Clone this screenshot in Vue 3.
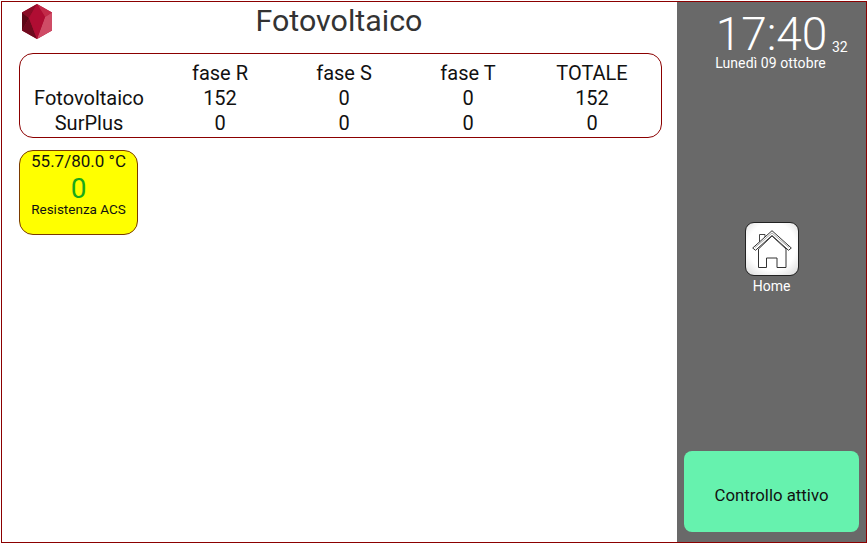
<template>
  <div class="screen">
    <main class="content">
      <header class="top">
        <svg class="logo" viewBox="0 0 32 36" width="32" height="36">
          <polygon points="16,0 31,8.5 31,26.5 16,35 1,26.5 1,8.5" fill="#a80f30" />
          <polygon points="1,8.5 8,14 1,26.5" fill="#5c0716" />
          <polygon points="1,26.5 8,14 16,35" fill="#6f0a1e" />
          <polygon points="16,0 1,8.5 8,14" fill="#8a0c26" />
          <polygon points="16,0 31,8.5 24,13" fill="#c22a48" />
          <polygon points="31,8.5 31,26.5 16,35 24,13" fill="#cf4c66" />
          <polygon points="16,0 24,13 16,35 8,14" fill="#b00d33" />
        </svg>
        <h1 class="title">Fotovoltaico</h1>
      </header>

      <section class="table-box">
        <div class="row" v-for="row in rows" :key="row.name">
          <div class="name">{{ row.name }}</div>
          <div class="cell" v-for="(val, i) in row.values" :key="i">{{ val }}</div>
        </div>
      </section>

      <div class="acs-card">
        <div class="acs-temp">55.7/80.0 °C</div>
        <div class="acs-value">0</div>
        <div class="acs-label">Resistenza ACS</div>
      </div>
    </main>

    <aside class="side">
      <div class="clock">
        <div class="time-line">
          <span class="time">17:40</span>
          <span class="secs">32</span>
        </div>
        <div class="date">Lunedì 09 ottobre</div>
      </div>

      <div class="home">
        <button class="home-btn">
          <svg viewBox="0 0 40 38" width="40" height="38">
            <path d="M7.5 13V4.5h5.5V9" fill="#fff" stroke="#444" stroke-width="1" />
            <path d="M6.5 19V37.5H14.5V28H25V37.5H34V19L20 6Z" fill="#fff" stroke="#333" stroke-width="1" />
            <path d="M.7 18 20 .7 39.3 18 36.5 20.3 20 5.5 3.5 20.3Z" fill="#fff" stroke="#333" stroke-width="1" stroke-linejoin="round" />
            <path d="M3 17.5 20 3 37 17.5" fill="none" stroke="#aaa" stroke-width="1" />
          </svg>
        </button>
        <div class="home-label">Home</div>
      </div>

      <button class="control">Controllo attivo</button>
    </aside>
  </div>
</template>

<script setup>
const rows = [
  { name: '', values: ['fase R', 'fase S', 'fase T', 'TOTALE'] },
  { name: 'Fotovoltaico', values: ['152', '0', '0', '152'] },
  { name: 'SurPlus', values: ['0', '0', '0', '0'] }
]
</script>

<style>
html, body {
  margin: 0;
  padding: 0;
  background: #fff;
}
</style>

<style scoped>
.screen {
  width: 866px;
  height: 542px;
  margin: 1px;
  box-sizing: border-box;
  border: 1px solid #8b0000;
  display: flex;
  font-family: Roboto, "Liberation Sans", sans-serif;
  background: #fff;
  overflow: hidden;
}

.content {
  width: 675px;
  flex: none;
  box-sizing: border-box;
  padding: 0 15px 0 17px;
  display: flex;
  flex-direction: column;
  align-items: flex-start;
}

.top {
  width: 643px;
  height: 51px;
  position: relative;
  flex: none;
}

.logo {
  position: absolute;
  left: 2px;
  top: 2px;
}

.title {
  margin: 0 0 0 -1px;
  padding: 1px 2px 0 0;
  font-size: 30.4px;
  font-weight: 400;
  line-height: 36px;
  color: #333;
  text-align: center;
}

.table-box {
  width: 643px;
  height: 85px;
  box-sizing: border-box;
  border: 1px solid #8b0000;
  border-radius: 14px;
  padding-top: 7px;
  flex: none;
}

.row {
  display: grid;
  grid-template-columns: 138px repeat(4, 124px);
  height: 25px;
  line-height: 25px;
  font-size: 20px;
  color: #111;
  text-align: center;
}

.acs-card {
  width: 119px;
  height: 85px;
  margin-top: 12px;
  box-sizing: border-box;
  border: 1px solid #7a3a00;
  border-radius: 14px;
  background: #ff0;
  text-align: center;
  color: #111;
}

.acs-temp {
  font-size: 17px;
  line-height: 20px;
}

.acs-value {
  font-size: 28px;
  line-height: 28px;
  margin-top: 4px;
  color: #1aa81a;
}

.acs-label {
  font-size: 13.5px;
  line-height: 16px;
  margin-top: -2px;
}

.side {
  width: 189px;
  flex: none;
  background: #696969;
  color: #fff;
  display: flex;
  flex-direction: column;
  align-items: center;
  box-sizing: border-box;
  padding: 0 0 10px;
}

.clock {
  height: 220px;
  flex: none;
  width: 100%;
  position: relative;
  text-align: center;
}

.time-line {
  padding-top: 9px;
  height: 46px;
  line-height: 46px;
}

.time {
  font-size: 46px;
  font-weight: 300;
}

.secs {
  position: absolute;
  left: 155px;
  top: 36px;
  font-size: 14px;
  line-height: 18px;
}

.date {
  font-size: 14px;
  line-height: 16px;
  margin-top: -2px;
  padding-right: 2px;
  letter-spacing: 0.1px;
}

.home {
  display: flex;
  flex-direction: column;
  align-items: center;
}

.home-btn {
  width: 54px;
  height: 54px;
  padding: 0;
  box-sizing: border-box;
  border: 1px solid #222;
  border-radius: 9px;
  background: radial-gradient(circle at 50% 45%, #fff 62%, #d8d8d8 100%);
  display: flex;
  align-items: center;
  justify-content: center;
}

.home-label {
  font-size: 14px;
  line-height: 16px;
  margin-top: 2px;
}

.control {
  margin-top: auto;
  width: 175px;
  height: 81px;
  border: none;
  border-radius: 8px;
  background: #66f2ae;
  color: #111;
  font-family: inherit;
  font-size: 16.8px;
  padding: 7px 0 0;
}
</style>
